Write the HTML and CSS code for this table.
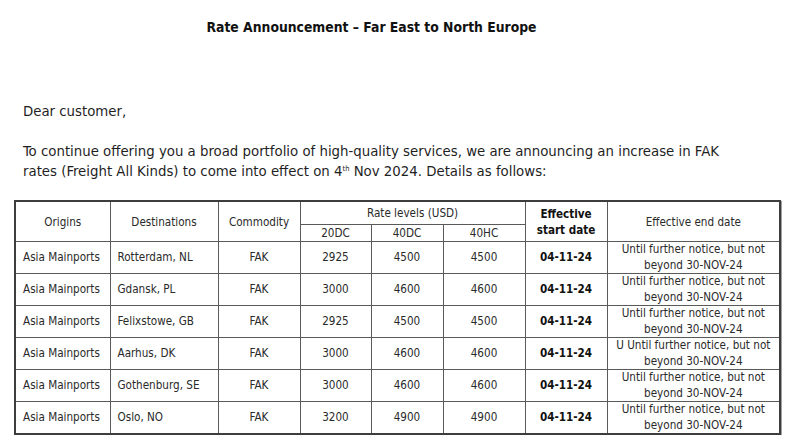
FILE: index.html
```html
<!DOCTYPE html>
<html lang="en">
<head>
<meta charset="utf-8">
<title>Rate Announcement – Far East to North Europe</title>
<link rel="stylesheet" href="styles.css">
</head>
<body>
<div class="page">
  <div class="letter">
    <h1 class="title">Rate Announcement – Far East to North Europe</h1>
    <p class="greeting">Dear customer,</p>
    <p class="intro">To continue offering you a broad portfolio of high-quality services, we are announcing an increase in FAK<br>rates (Freight All Kinds) to come into effect on 4<sup>th</sup> Nov 2024. Details as follows:</p>
  </div>
  <table class="rates">
    <colgroup>
      <col class="c-origin"><col class="c-dest"><col class="c-comm">
      <col class="c-rate"><col class="c-rate2"><col class="c-rate3">
      <col class="c-start"><col class="c-end">
    </colgroup>
    <thead>
      <tr class="h1">
        <th rowspan="2">Origins</th>
        <th rowspan="2">Destinations</th>
        <th rowspan="2">Commodity</th>
        <th colspan="3">Rate levels (USD)</th>
        <th rowspan="2" class="bold">Effective<br>start date</th>
        <th rowspan="2">Effective end date</th>
      </tr>
      <tr class="h2">
        <th>20DC</th><th>40DC</th><th>40HC</th>
      </tr>
    </thead>
    <tbody>
      <tr><td class="left">Asia Mainports</td><td class="left">Rotterdam, NL</td><td>FAK</td><td>2925</td><td>4500</td><td>4500</td><td class="bold">04-11-24</td><td>Until further notice, but not<br>beyond 30-NOV-24</td></tr>
      <tr><td class="left">Asia Mainports</td><td class="left">Gdansk, PL</td><td>FAK</td><td>3000</td><td>4600</td><td>4600</td><td class="bold">04-11-24</td><td>Until further notice, but not<br>beyond 30-NOV-24</td></tr>
      <tr><td class="left">Asia Mainports</td><td class="left">Felixstowe, GB</td><td>FAK</td><td>2925</td><td>4500</td><td>4500</td><td class="bold">04-11-24</td><td>Until further notice, but not<br>beyond 30-NOV-24</td></tr>
      <tr><td class="left">Asia Mainports</td><td class="left">Aarhus, DK</td><td>FAK</td><td>3000</td><td>4600</td><td>4600</td><td class="bold">04-11-24</td><td>U Until further notice, but not<br>beyond 30-NOV-24</td></tr>
      <tr><td class="left">Asia Mainports</td><td class="left">Gothenburg, SE</td><td>FAK</td><td>3000</td><td>4600</td><td>4600</td><td class="bold">04-11-24</td><td>Until further notice, but not<br>beyond 30-NOV-24</td></tr>
      <tr><td class="left">Asia Mainports</td><td class="left">Oslo, NO</td><td>FAK</td><td>3200</td><td>4900</td><td>4900</td><td class="bold">04-11-24</td><td>Until further notice, but not<br>beyond 30-NOV-24</td></tr>
    </tbody>
  </table>
</div>
</body>
</html>
```
FILE: styles.css
```css
html, body {
  margin: 0;
  padding: 0;
  background: #fff;
}
body {
  font-family: "DejaVu Sans Condensed", "DejaVu Sans", sans-serif;
  color: #1f1f1f;
}
.page {
  padding: 18px 0 0 14px;
}
.letter {
  width: 697px;
  margin-left: 9px;
}
.title {
  margin: 0;
  font-size: 13.8px;
  line-height: 18px;
  font-weight: bold;
  text-align: center;
  color: #111;
}
.greeting {
  margin: 65px 0 0;
  font-size: 14.8px;
  line-height: 20px;
}
.intro {
  margin: 20px 0 0;
  font-size: 14.8px;
  line-height: 20px;
  white-space: nowrap;
}
.intro sup {
  font-size: 7.5px;
  line-height: 0;
  vertical-align: 5px;
}
.rates {
  margin-top: 19px;
  width: 765px;
  table-layout: fixed;
  border-collapse: collapse;
  border: 2px solid #3d3d3d;
  box-shadow: 1px 1px 0 #a0a0a0;
  font-size: 11.6px;
  color: #2a2a2a;
}
.c-origin { width: 95px; }
.c-dest { width: 108px; }
.c-comm { width: 82px; }
.c-rate { width: 71px; }
.c-rate2 { width: 72px; }
.c-rate3 { width: 82px; }
.c-start { width: 82px; }
.c-end { width: 173px; }
.rates th,
.rates td {
  border: 1px solid #5a5a5a;
  padding: 0;
  text-align: center;
  vertical-align: middle;
  font-weight: normal;
  line-height: 16px;
}
.rates tr.h1 th { height: 22px; }
.rates tr.h2 th { height: 16px; line-height: 15px; }
.rates tbody td {
  height: 31px;
  line-height: 15.5px;
}
.rates td.left {
  text-align: left;
  padding-left: 7px;
}
.rates .bold {
  font-weight: bold;
  color: #111;
}
```
